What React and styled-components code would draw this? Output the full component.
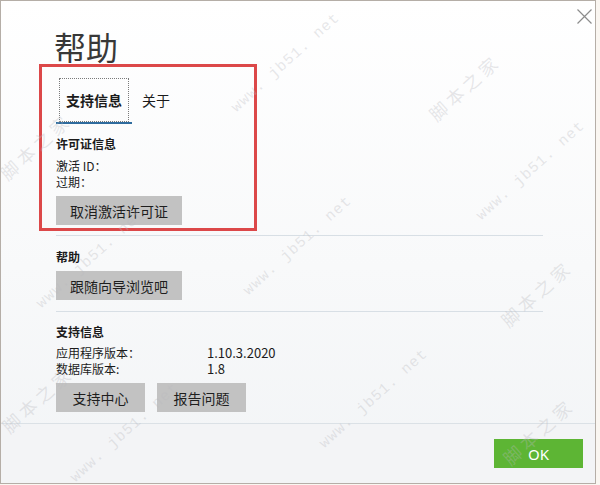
import React from "react";
import styled, { createGlobalStyle } from "styled-components";

const GlobalStyle = createGlobalStyle`
  html, body {
    margin: 0;
    padding: 0;
  }
  body {
    background: #faf6f1;
    font-family: "Noto Sans CJK SC", "Noto Sans", sans-serif;
    color: #1b1b1b;
  }
`;

const Window = styled.div`
  position: relative;
  width: 596px;
  height: 484px;
  box-sizing: border-box;
  border: 1px solid #b5aea7;
  background: linear-gradient(180deg, #ffffff 0%, #f8f9fa 55%, #f2f4f6 100%);
  display: flex;
  flex-direction: column;
  overflow: hidden;
`;

const Header = styled.div`
  display: flex;
  justify-content: space-between;
  align-items: flex-start;
  padding: 8px 3px 0 53px;
`;

const Title = styled.h1`
  margin: 20px 0 0;
  font-size: 32px;
  line-height: 34px;
  font-weight: 400;
  color: #383838;
`;

const CloseButton = styled.button`
  width: 15px;
  height: 15px;
  padding: 0;
  border: none;
  background: none;
  display: flex;
  cursor: pointer;
`;

const Body = styled.div`
  padding: 0 52px 0 55px;
`;

const Highlight = styled.div`
  box-sizing: border-box;
  width: 218px;
  margin: 1px 0 0 -17px;
  padding: 11px 0 3px 14px;
  border: 3px solid #dc4849;
`;

const Tabs = styled.div`
  display: flex;
`;

const Tab = styled.div`
  padding: 0 3px;
  border-bottom: 2px solid ${(p) => (p.$active ? "#2f6c9e" : "transparent")};
  font-size: 14px;
  font-weight: ${(p) => (p.$active ? 700 : 400)};
  cursor: pointer;
`;

const TabLabel = styled.span`
  display: block;
  box-sizing: border-box;
  height: 44px;
  line-height: 42px;
  padding: 0 6px;
  border: 1px dotted ${(p) => (p.$focused ? "#7a7a7a" : "transparent")};
`;

const Heading = styled.div`
  margin-top: ${(p) => p.$top || 0}px;
  font-size: 12px;
  line-height: 20px;
  font-weight: 700;
`;

const InfoGrid = styled.div`
  display: grid;
  grid-template-columns: 151px auto;
  margin-top: ${(p) => p.$top || 0}px;
  font-size: 12px;
  line-height: 16px;
`;

const Value = styled.span`
  font-size: 13px;
`;

const ButtonRow = styled.div`
  display: flex;
  gap: 12px;
  margin-top: ${(p) => p.$top || 0}px;
`;

const GrayButton = styled.button`
  height: 29px;
  min-width: 89px;
  padding: 0 14px;
  border: none;
  background: #c2c2c2;
  color: #1e1e1e;
  font-family: inherit;
  font-size: 14px;
  cursor: pointer;
`;

const Section = styled.div`
  margin-top: ${(p) => p.$top || 0}px;
  padding: ${(p) => p.$pad || "10px 0 11px"};
  border-top: 1px solid #d8dfe5;
`;

const Footer = styled.div`
  margin-top: auto;
  height: 60px;
  box-sizing: border-box;
  padding: 15px 12px 0 0;
  border-top: 1px solid #dbe1e6;
  background: #f3f4f6;
  display: flex;
  justify-content: flex-end;
  align-items: flex-start;
`;

const OkButton = styled.button`
  width: 89px;
  height: 29px;
  border: none;
  background: #5db534;
  color: #ffffff;
  font-family: "Noto Sans", sans-serif;
  font-size: 15px;
  cursor: pointer;
`;

const WatermarkLayer = styled.div`
  position: absolute;
  inset: 0;
  pointer-events: none;
  z-index: 2;
`;

const Mark = styled.span`
  position: absolute;
  white-space: nowrap;
  transform: translate(-50%, -50%) rotate(-42deg);
  color: rgba(185, 185, 190, 0.34);
  font-family: ${(p) => (p.$cn ? '"Noto Sans CJK SC", sans-serif' : '"Liberation Mono", monospace')};
  font-size: ${(p) => (p.$cn ? 18 : 15)}px;
  letter-spacing: ${(p) => (p.$cn ? 4 : 1)}px;
`;

const marks = [
  { t: "www. jb51. net", x: 285, y: 62 },
  { t: "脚本之家", x: 463, y: 86, cn: true },
  { t: "www. jb51. net", x: 530, y: 170 },
  { t: "脚本之家", x: 34, y: 145, cn: true },
  { t: "www. jb51. net", x: 297, y: 245 },
  { t: "www. jb51. net", x: 90, y: 258 },
  { t: "脚本之家", x: 535, y: 292, cn: true },
  { t: "www. jb51. net", x: 373, y: 398 },
  { t: "脚本之家", x: 36, y: 398, cn: true },
  { t: "www. jb51. net", x: 124, y: 432 },
  { t: "脚本之家", x: 537, y: 430, cn: true },
];

const CloseIcon = () => (
  <svg width="15" height="15" viewBox="0 0 15 15">
    <path d="M0.5 0.5 L14.5 14.5 M14.5 0.5 L0.5 14.5" stroke="#8c8c8c" strokeWidth="1.2" fill="none" />
  </svg>
);

const App = () => {
  return (
    <>
      <GlobalStyle />
      <Window>
        <Header>
          <Title>帮助</Title>
          <CloseButton aria-label="关闭">
            <CloseIcon />
          </CloseButton>
        </Header>
        <Body>
          <Highlight>
            <Tabs>
              <Tab $active>
                <TabLabel $focused>支持信息</TabLabel>
              </Tab>
              <Tab>
                <TabLabel>关于</TabLabel>
              </Tab>
            </Tabs>
            <Heading $top={10}>许可证信息</Heading>
            <InfoGrid $top={4}>
              <span>激活 ID：</span>
              <span />
              <span>过期：</span>
              <span />
            </InfoGrid>
            <ButtonRow $top={6}>
              <GrayButton>取消激活许可证</GrayButton>
            </ButtonRow>
          </Highlight>
          <Section $top={4} $pad="11px 0 11px">
            <Heading>帮助</Heading>
            <ButtonRow $top={4}>
              <GrayButton>跟随向导浏览吧</GrayButton>
            </ButtonRow>
          </Section>
          <Section $pad="10px 0 10px">
            <Heading>支持信息</Heading>
            <InfoGrid $top={3}>
              <span>应用程序版本：</span>
              <Value>1.10.3.2020</Value>
              <span>数据库版本:</span>
              <Value>1.8</Value>
            </InfoGrid>
            <ButtonRow $top={6}>
              <GrayButton>支持中心</GrayButton>
              <GrayButton>报告问题</GrayButton>
            </ButtonRow>
          </Section>
        </Body>
        <Footer>
          <OkButton>OK</OkButton>
        </Footer>
        <WatermarkLayer>
          {marks.map((m, i) => (
            <Mark key={i} $cn={m.cn} style={{ left: m.x, top: m.y }}>
              {m.t}
            </Mark>
          ))}
        </WatermarkLayer>
      </Window>
    </>
  );
};

export default App;
